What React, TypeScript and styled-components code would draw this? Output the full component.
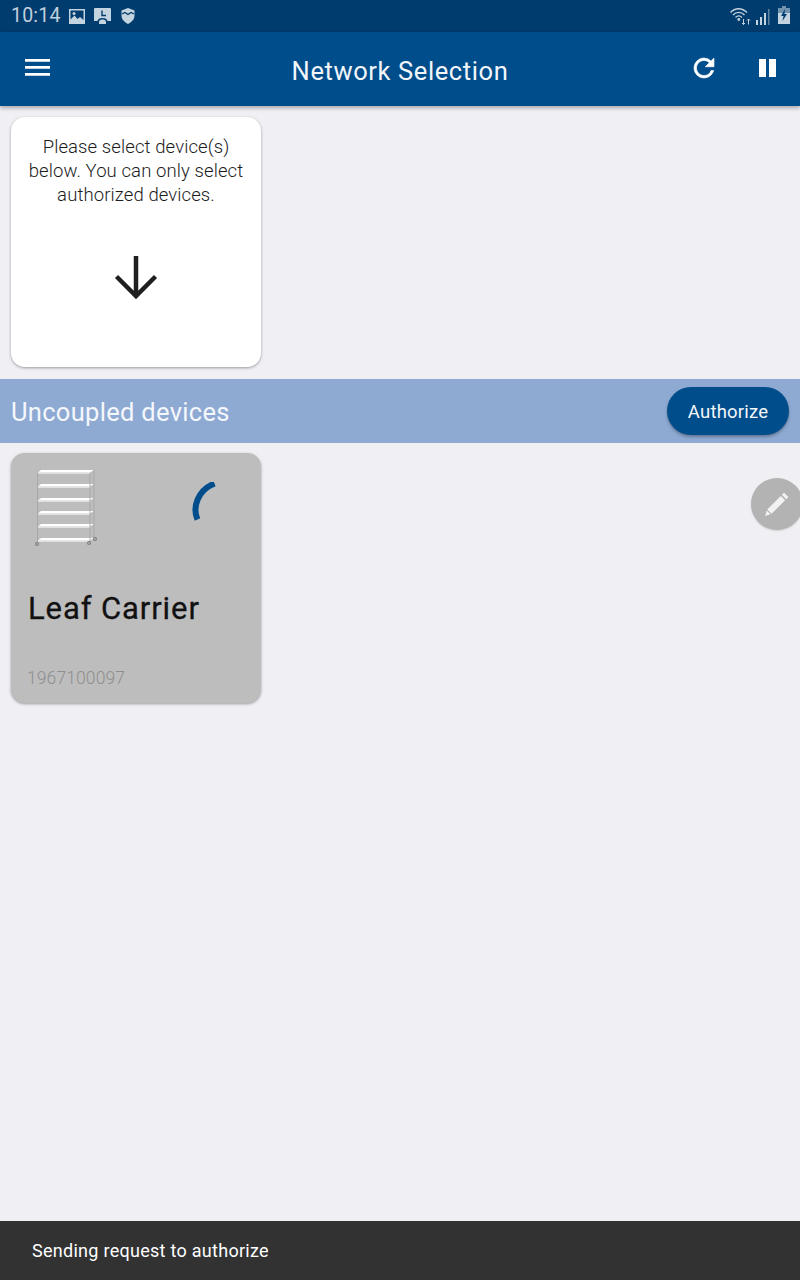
import React from "react";
import styled, { createGlobalStyle } from "styled-components";

const Global = createGlobalStyle`
  html, body { margin: 0; padding: 0; background: #efeff4; }
  #root { width: 800px; height: 1280px; overflow: hidden; }
`;
const Page = styled.div`
  position: relative; width: 800px; height: 1280px; background: #efeff4; overflow: hidden;
  display: flex; flex-direction: column; font-family: Roboto, "Liberation Sans", sans-serif;
`;
const StatusBar = styled.div`
  height: 32px; background: #003c6d; color: #c4d3e0; display: flex; align-items: center;
  padding: 0 10px 0 11px; gap: 8px; flex: none;
`;
const Clock = styled.span`font-size: 19.5px; letter-spacing: 0.2px; line-height: 32px; color: #c0d0de;`;
const Spacer = styled.div`flex: 1;`;
const StatusIcons = styled.div`display: flex; align-items: center; gap: 5px; height: 32px;`;
const TopBar = styled.header`
  height: 74px; background: #004d8b; color: #fff; display: flex; align-items: center; flex: none;
  padding: 0 20px 0 25px; position: relative; box-shadow: 0 2px 4px rgba(0,0,0,.3); z-index: 2;
  justify-content: space-between;
`;
const Title = styled.h1`
  position: absolute; left: 0; right: 0; top: 0; margin: 0; text-align: center; font-weight: 400;
  font-size: 25.5px; line-height: 79px; letter-spacing: 0.6px; color: #f2f6fa;
`;
const BarIcons = styled.div`display: flex; align-items: center; gap: 37px; margin-top: -3px;`;
const IconBtn = styled.div`display: flex; width: 26px; height: 26px; align-items: center; justify-content: center;`;
const Content = styled.main`flex: 1; display: flex; flex-direction: column; padding-top: 11px;`;
const Card = styled.div`
  width: 250px; height: 250px; margin-left: 11px; border-radius: 14px; background: #fff;
  box-shadow: 0 1px 3px rgba(0,0,0,.35); display: flex; flex-direction: column; align-items: center;
  box-sizing: border-box; padding-top: 18px;
`;
const Prompt = styled.p`
  margin: 0; width: 225px; text-align: center; font-size: 18.5px; line-height: 24px; font-weight: 300;
  letter-spacing: 0.1px; color: #1c1c1c;
`;
const ArrowWrap = styled.div`margin-top: 47px; display: flex;`;
const SectionBar = styled.div`
  margin-top: 12px; height: 64px; background: #8eaad3; display: flex; align-items: center;
  justify-content: space-between; padding: 0 11px; box-sizing: border-box;
`;
const SectionTitle = styled.h2`
  margin: 2px 0 0; font-weight: 400; font-size: 25.5px; letter-spacing: 0.3px; color: #f4f7fb;
`;
const AuthorizeBtn = styled.button`
  width: 122px; height: 48px; border: none; border-radius: 24px; background: #004d8b; color: #f2f6fa;
  font: 400 18.5px Roboto, sans-serif; letter-spacing: 0.2px; box-shadow: 0 2px 3px rgba(0,0,0,.3);
  padding: 2px 0 0; margin-top: 0;
`;
const DeviceCard = styled.div`
  width: 250px; height: 250px; margin: 10px 0 0 11px; border-radius: 14px; background: #bdbdbd;
  box-shadow: 0 1px 3px rgba(0,0,0,.35); box-sizing: border-box; position: relative;
  display: flex; flex-direction: column; padding: 15px 17px 14px;
`;
const DeviceTop = styled.div`display: flex; justify-content: space-between; height: 82px; padding-right: 24px;`;
const DeviceName = styled.div`
  margin-top: 41px; font-size: 31px; line-height: 36px; font-weight: 400; letter-spacing: 0.9px; color: #111;
  -webkit-text-stroke: 0.3px #111;
`;
const Serial = styled.div`
  margin-top: auto; font-size: 17.5px; line-height: 22px; font-weight: 300; letter-spacing: 0.1px; color: #8f8f8f;
  margin-left: -1px;
`;
const Fab = styled.div`
  position: absolute; left: 751px; top: 478px; width: 52px; height: 52px; border-radius: 50%;
  background: #b3b3b3; display: flex; align-items: center; justify-content: center;
  box-shadow: 0 1px 2px rgba(0,0,0,.12);
`;
const Snackbar = styled.div`
  height: 59px; background: #323232; color: #fff; flex: none; display: flex; align-items: center;
  padding-left: 32px; font-size: 18px; letter-spacing: 0.28px; box-sizing: border-box;
`;

const Shelf = ({ y }: { y: number }) => (
  <g>
    <path d={`M7 ${y + 2.5} L10 ${y} H63 L59 ${y + 2.5} Z`} fill="#fff" />
    <path d={`M7 ${y + 2.500} H59 V${y + 3.800} H7 Z`} fill="#ececec" />
  </g>
);

export default function App() {
  return (
    <Page>
      <Global />
      <StatusBar>
        <Clock>10:14</Clock>
        <svg width="16" height="15" viewBox="0 0 16 15">
          <path fill="#c4d3e0" d="M0 0h16v15H0z" />
          <path fill="#003c6d" d="M1.500 1.500h13v9.500l-3.500-3-2.500 2-3-3.500-4 4z" />
          <circle cx="5" cy="4.500" r="1.500" fill="#c4d3e0" />
        </svg>
        <svg width="17" height="16" viewBox="0 0 17 16" style={{ marginLeft: 1 }}>
          <path fill="#c4d3e0" d="M1 0h15a1 1 0 0 1 1 1v12h-3.500c-.5-2-2-3-5-3s-4.500 1-5 3H0V1a1 1 0 0 1 1-1z" />
          <path fill="#c4d3e0" d="M5 13.500c.5-1.500 2-2 3.500-2s3 .5 3.500 2v2.500H5z" />
          <path fill="none" stroke="#003c6d" strokeWidth="1.400" d="M8 2.500v5h4" />
        </svg>
        <svg width="14" height="16" viewBox="0 0 14 16" style={{ marginLeft: 2 }}>
          <path fill="#c4d3e0" d="M7 0l6.500 2.500V7.500c0 3.500-2.500 6.500-6.500 8.500C3 14 .5 11 .5 7.500V2.500z" />
          <path fill="none" stroke="#003c6d" strokeWidth="1.300" d="M1 6l3-1.500 3 2 3-2 3 1.500" />
        </svg>
        <Spacer />
        <StatusIcons>
          <svg width="21" height="18" viewBox="0 0 21 18">
            <g fill="none" stroke="#c4d3e0" strokeWidth="1.300">
              <path d="M0.500 5.500C5 .5 12 .5 17 5.500" />
              <path d="M3 8C6 4.500 11.500 4.500 14.500 8" />
              <path d="M5.500 10.500c2-2 4.500-2 6.500 0" />
            </g>
            <circle cx="8.800" cy="12.500" r="1.400" fill="#c4d3e0" />
            <path d="M13.500 12v5.500m-1.500-1.500l1.500 1.500 1.500-1.500M18.500 17.500v-5.500m-1.500 1.500l1.500-1.500 1.500 1.500" stroke="#c4d3e0" strokeWidth="1" fill="none" />
          </svg>
          <svg width="14" height="16" viewBox="0 0 14 16" style={{ marginTop: 1 }}>
            <path fill="#c4d3e0" d="M0 11h2v5H0zM4 8h2v8H4zM8 4h2v12H8z" />
            <path fill="#5f84a3" d="M12 0h1.500v16H12z" />
          </svg>
          <svg width="12" height="18" viewBox="0 0 12 18" style={{ marginLeft: 3, marginTop: -2 }}>
            <path fill="#6f93ae" d="M4 0h4v2H4z" />
            <path fill="#6f93ae" d="M0 2h12v5H0z" />
            <path fill="#c4d3e0" d="M0 7h12v11H0z" />
            <path fill="#003c6d" d="M7 3L3 10h2.500L4.500 15 9 8H6.500z" />
          </svg>
        </StatusIcons>
      </StatusBar>
      <TopBar>
        <svg width="25" height="17" viewBox="0 0 25 17" style={{ marginTop: -3 }}>
          <path fill="#fff" d="M0 0h25v2.800H0zM0 7h25v2.800H0zM0 14h25v2.800H0z" />
        </svg>
        <Title>Network Selection</Title>
        <BarIcons>
          <IconBtn>
            <svg width="26" height="26" viewBox="0 0 24 24">
              <path fill="#fff" stroke="#fff" strokeWidth="0.5" d="M17.650 6.350A7.958 7.958 0 0 0 12 4c-4.420 0-7.990 3.580-7.990 8s3.570 8 7.990 8c3.730 0 6.840-2.550 7.730-6h-2.080A5.990 5.990 0 0 1 12 18c-3.310 0-6-2.690-6-6s2.690-6 6-6c1.660 0 3.140.69 4.220 1.780L13 11h7V4l-2.350 2.350z" transform="translate(-1.800 -1.800) scale(1.150)" />
            </svg>
          </IconBtn>
          <IconBtn>
            <svg width="17" height="18" viewBox="0 0 17 18">
              <path fill="#fff" d="M0 0h7v18H0zM10 0h7v18h-7z" />
            </svg>
          </IconBtn>
        </BarIcons>
      </TopBar>
      <Content>
        <Card>
          <Prompt>Please select device(s) below. You can only select authorized devices.</Prompt>
          <ArrowWrap>
            <svg width="46" height="46" viewBox="0 0 46 46">
              <path fill="none" stroke="#1f1f1f" strokeWidth="4.500" d="M23 2v40M3.500 22.500L23 42 42.500 22.500" />
            </svg>
          </ArrowWrap>
        </Card>
        <SectionBar>
          <SectionTitle>Uncoupled devices</SectionTitle>
          <AuthorizeBtn>Authorize</AuthorizeBtn>
        </SectionBar>
        <DeviceCard>
          <DeviceTop>
            <svg width="66" height="78" viewBox="0 0 66 78" style={{ marginLeft: 3 }}>
              {[2, 16, 30, 43, 56, 70].map((y) => <Shelf key={y} y={y} />)}
              <g fill="none" stroke="#a6a6a6" strokeWidth=".9">
                <path d="M6.500 5v70M59 5v69M63 2v68" />
              </g>
              <g fill="#a0a0a0" stroke="#808080" strokeWidth=".8">
                <circle cx="6" cy="76" r="1.700" />
                <circle cx="58" cy="75" r="1.700" />
                <circle cx="64" cy="71" r="1.700" />
              </g>
            </svg>
            <svg width="30" height="50" viewBox="0 0 30 50" style={{ marginTop: 14 }}>
              <path fill="none" stroke="#004d8b" strokeWidth="6" d="M7.500 37.500C2 25 8 8 24.500 1.500" />
            </svg>
          </DeviceTop>
          <DeviceName>Leaf Carrier</DeviceName>
          <Serial>1967100097</Serial>
        </DeviceCard>
      </Content>
      <Fab>
        <svg width="26" height="26" viewBox="0 0 24 24">
          <path fill="#f2f2f2" d="M18.500 1.500l4 4-2 2-4-4zM15.500 4.500l4 4L7 21l-4-4zM2.500 18l3.500 3.500-5 1.500z" />
        </svg>
      </Fab>
      <Snackbar>Sending request to authorize</Snackbar>
    </Page>
  );
}
